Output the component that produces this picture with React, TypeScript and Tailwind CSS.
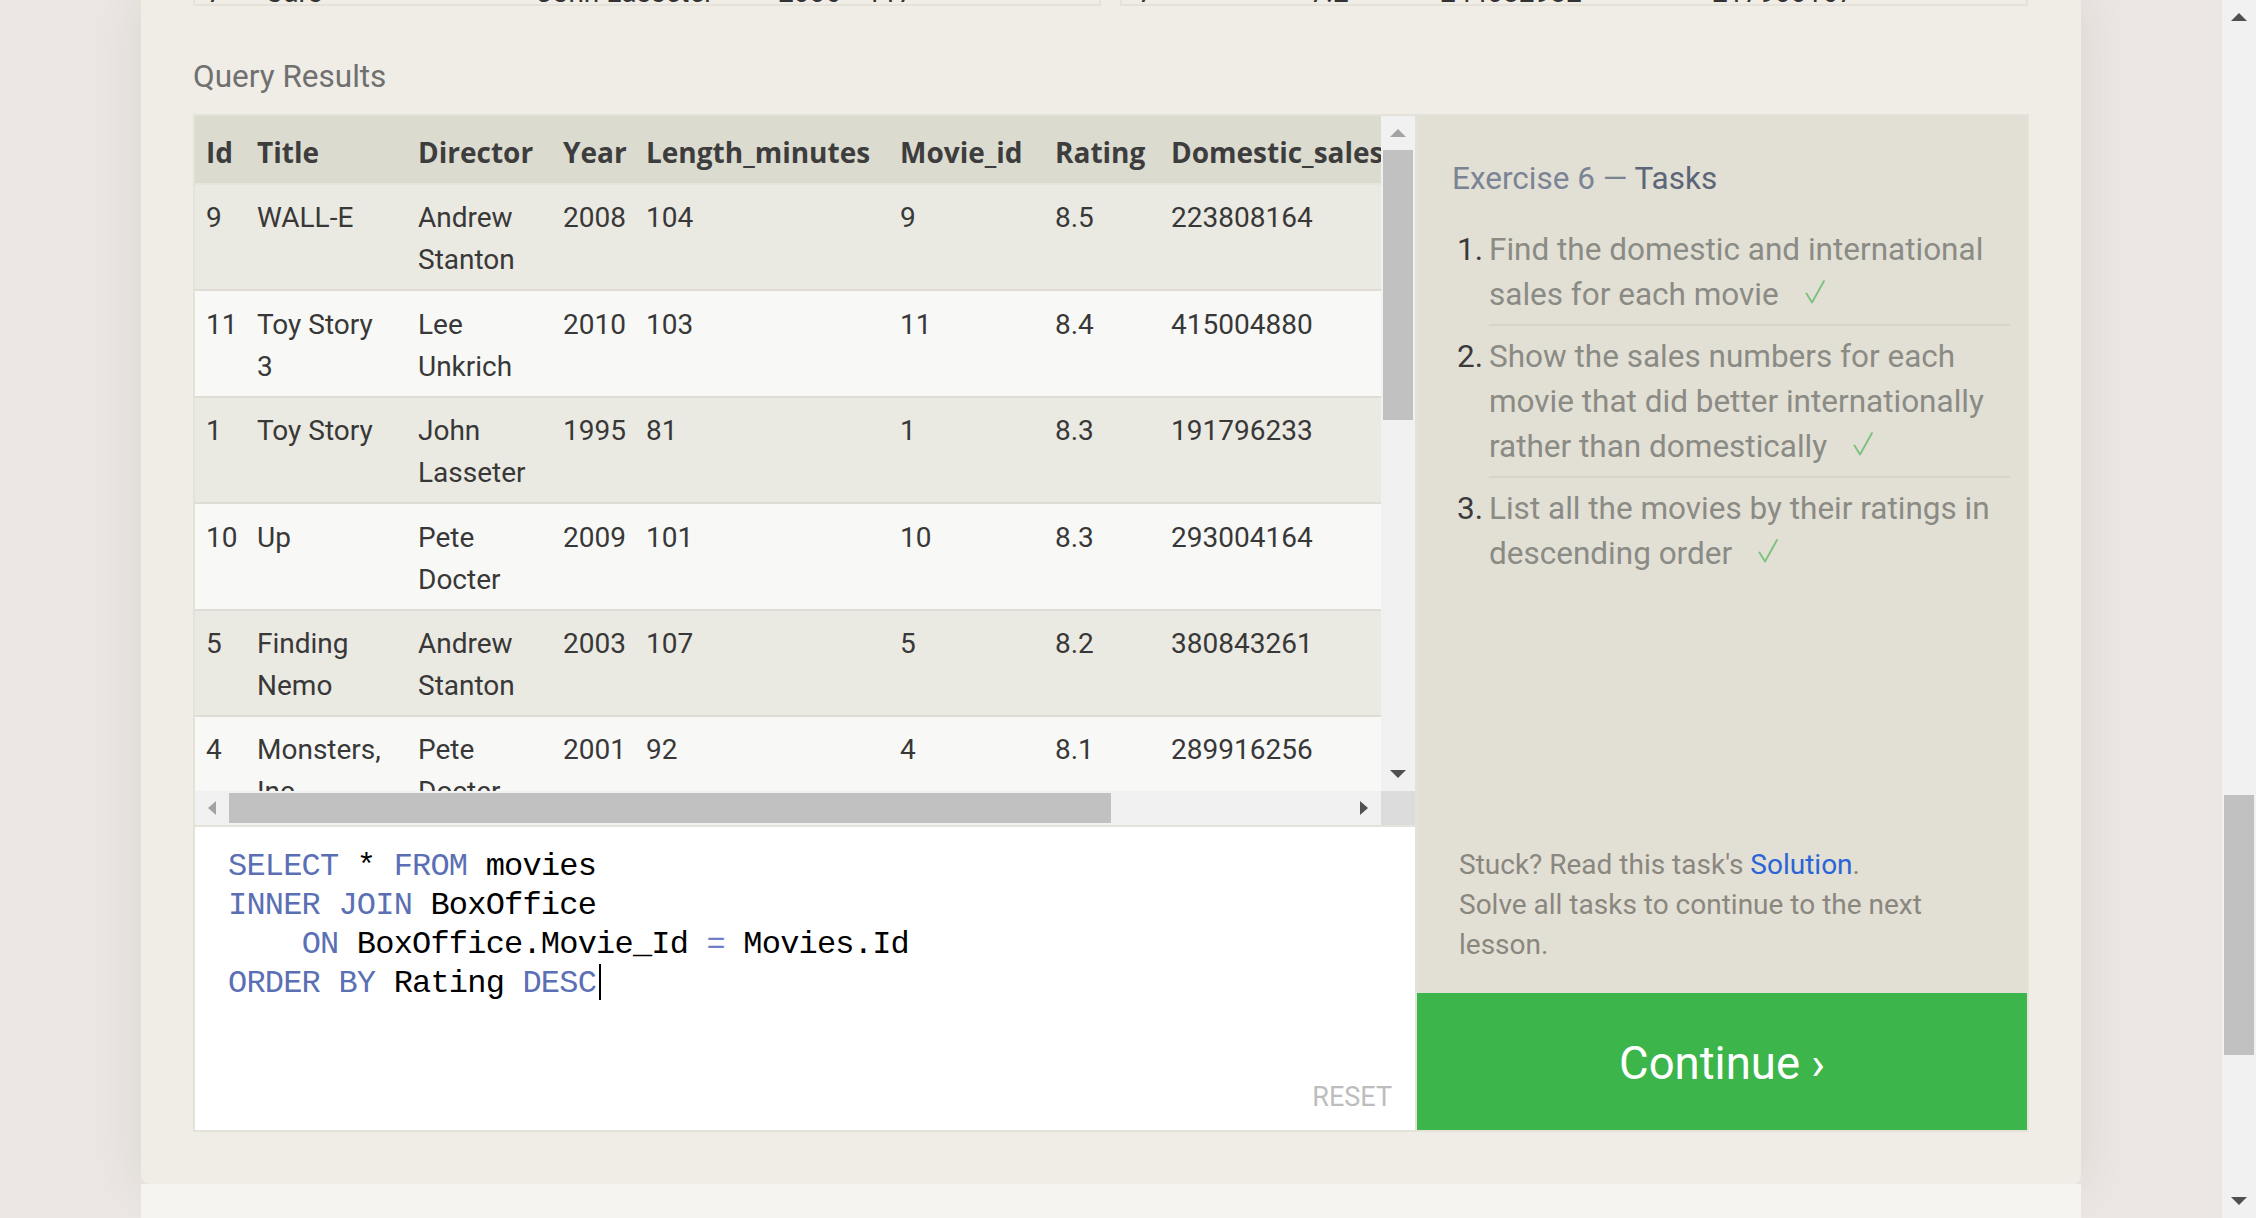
import React from "react";

type Dir = "up" | "down" | "left" | "right";

const columns = [
  { label: "Id", width: "w-[51px]" },
  { label: "Title", width: "w-[161px]" },
  { label: "Director", width: "w-[145px]" },
  { label: "Year", width: "w-[83px]" },
  { label: "Length_minutes", width: "w-[254px]" },
  { label: "Movie_id", width: "w-[155px]" },
  { label: "Rating", width: "w-[116px]" },
  { label: "Domestic_sales", width: "w-[250px]" },
];

// wrapped the way the narrow result pane wraps them
const rows = [
  ["9", "WALL-E", "Andrew\nStanton", "2008", "104", "9", "8.5", "223808164"],
  ["11", "Toy Story\n3", "Lee\nUnkrich", "2010", "103", "11", "8.4", "415004880"],
  ["1", "Toy Story", "John\nLasseter", "1995", "81", "1", "8.3", "191796233"],
  ["10", "Up", "Pete\nDocter", "2009", "101", "10", "8.3", "293004164"],
  ["5", "Finding\nNemo", "Andrew\nStanton", "2003", "107", "5", "8.2", "380843261"],
  ["4", "Monsters,\nInc.", "Pete\nDocter", "2001", "92", "4", "8.1", "289916256"],
];

const tasks = [
  ["Find the domestic and international", "sales for each movie"],
  ["Show the sales numbers for each", "movie that did better internationally", "rather than domestically"],
  ["List all the movies by their ratings in", "descending order"],
];

function Arrow({ dir, className = "" }: { dir: Dir; className?: string }) {
  const vertical = dir === "up" || dir === "down";
  const points = {
    up: "0,8 8,0 16,8",
    down: "0,0 16,0 8,8",
    left: "8,0 8,14 0,7",
    right: "0,0 8,7 0,14",
  }[dir];
  return (
    <svg
      viewBox={vertical ? "0 0 16 8" : "0 0 8 14"}
      className={`${vertical ? "h-[8px] w-[16px]" : "h-[14px] w-[8px]"} ${className}`}
      fill="currentColor"
      aria-hidden
    >
      <polygon points={points} />
    </svg>
  );
}

function Check() {
  return (
    <svg viewBox="0 0 20 24" className="ml-[26px] inline-block h-[24px] w-[20px] align-[1px]" fill="none" aria-hidden>
      <path d="M1.5 13.5 L7 22.5 L19 1" stroke="#79c27d" strokeWidth="1.8" strokeLinecap="round" strokeLinejoin="round" />
    </svg>
  );
}

export default function App() {
  const kw = "text-[#5a6fb4]";
  return (
    <div className="flex h-[1218px] w-full overflow-hidden bg-[#ebe6e3] font-['Roboto',sans-serif]">
      <div className="flex flex-1 flex-col items-center">
        <main className="flex h-[1184px] w-[1940px] shrink-0 flex-col rounded-b-[8px] bg-[#efede6] px-[52px] shadow-[0_0_48px_rgba(60,40,20,0.09)]">
          {/* Bottom edge of the two source tables, scrolled out of view */}
          <div className="flex gap-[19px] text-[28px] leading-[42px] text-[#333]">
            <div className="h-[6px] w-[908px] overflow-hidden border-x-2 border-b-2 border-[#e4e2d9]">
              <div className="-mt-[28px] flex whitespace-nowrap pl-[12px]">
                <span className="w-[58px]">7</span>
                <span className="w-[272px]">Cars</span>
                <span className="w-[241px]">John Lasseter</span>
                <span className="w-[88px]">2006</span>
                <span>117</span>
              </div>
            </div>
            <div className="h-[6px] w-[908px] overflow-hidden border-x-2 border-b-2 border-[#e4e2d9]">
              <div className="-mt-[28px] flex whitespace-nowrap pl-[16px]">
                <span className="w-[172px]">7</span>
                <span className="w-[130px]">7.2</span>
                <span className="w-[272px]">244082982</span>
                <span>217900167</span>
              </div>
            </div>
          </div>

          <h2 className="mt-[47px] text-[31.5px] leading-[47px] text-[#707070]">Query Results</h2>

          <section className="mt-[14px] flex gap-[2px] border-2 border-[#e4e2d9] bg-[#e4e2d9]">
            {/* Results + editor */}
            <div className="flex w-[1220px] flex-col gap-[2px]">
              <div>
                <div className="flex h-[675px]">
                  <div className="flex-1 overflow-hidden">
                    <table className="w-[1215px] table-fixed border-collapse text-[28px] leading-[42px] text-[#383838]">
                      <colgroup>
                        {columns.map((c) => (
                          <col key={c.label} className={c.width} />
                        ))}
                      </colgroup>
                      <thead>
                        <tr className="border-b-2 border-[#e5e4dd] bg-[#dcdbd0]">
                          {columns.map((c) => (
                            <th
                              key={c.label}
                              className="whitespace-nowrap px-[11px] pt-[15px] pb-[10px] text-left font-['Open_Sans',sans-serif] font-bold text-[#3d3d3d]"
                            >
                              {c.label}
                            </th>
                          ))}
                        </tr>
                      </thead>
                      <tbody>
                        {rows.map((r, i) => (
                          <tr
                            key={r[0]}
                            className={`border-b-2 border-[#dedcd5] ${i % 2 === 0 ? "bg-[#eae9e2]" : "bg-[#f8f8f7]"}`}
                          >
                            {r.map((v, j) => (
                              <td key={j} className="whitespace-pre-line px-[11px] pt-[12.4px] pb-[8px] align-top">
                                {v}
                              </td>
                            ))}
                          </tr>
                        ))}
                      </tbody>
                    </table>
                  </div>
                  {/* vertical scrollbar */}
                  <div className="flex w-[34px] flex-col bg-[#f1f1f1]">
                    <div className="flex h-[34px] items-center justify-center">
                      <Arrow dir="up" className="text-[#a3a3a3]" />
                    </div>
                    <div className="mx-[2px] h-[270px] bg-[#c1c1c1]" />
                    <div className="flex-1" />
                    <div className="flex h-[34px] items-center justify-center">
                      <Arrow dir="down" className="text-[#505050]" />
                    </div>
                  </div>
                </div>
                {/* horizontal scrollbar */}
                <div className="flex h-[34px]">
                  <div className="flex flex-1 bg-[#f1f1f1]">
                    <div className="flex w-[34px] items-center justify-center">
                      <Arrow dir="left" className="text-[#a3a3a3]" />
                    </div>
                    <div className="my-[2px] w-[882px] bg-[#c1c1c1]" />
                    <div className="flex-1" />
                    <div className="flex w-[34px] items-center justify-center">
                      <Arrow dir="right" className="text-[#505050]" />
                    </div>
                  </div>
                  <div className="w-[34px] bg-[#dcdcdc]" />
                </div>
              </div>

              {/* SQL editor */}
              <div className="flex h-[303px] flex-col bg-white">
                <div className="pl-[33px] pt-[20px] font-['Liberation_Mono',monospace] text-[32px] leading-[39px] tracking-[-0.8px] text-black">
                  <div className="whitespace-pre">
                    <span className={kw}>SELECT</span> * <span className={kw}>FROM</span> movies
                  </div>
                  <div className="whitespace-pre">
                    <span className={kw}>INNER JOIN</span> BoxOffice
                  </div>
                  <div className="whitespace-pre">
                    {"    "}
                    <span className={kw}>ON</span> BoxOffice.Movie_Id <span className="text-[#7080c8]">=</span> Movies.Id
                  </div>
                  <div className="whitespace-pre">
                    <span className={kw}>ORDER BY</span> Rating <span className={kw}>DESC</span>
                    <span className="ml-[3px] inline-block h-[36px] w-[2px] bg-black align-[-8px]" />
                  </div>
                </div>
                <button className="mt-auto mr-[23px] mb-[12px] self-end text-[27px] leading-[42px] text-[#bdbdbd]">
                  RESET
                </button>
              </div>
            </div>

            {/* Exercise tasks */}
            <aside className="flex flex-1 flex-col">
              <div className="flex flex-1 flex-col bg-[#e2dfd4] pt-[39px] pr-[17px] pl-[35px]">
                <h3 className="text-[31.5px] leading-[47px] text-[#7b8494]">
                  Exercise 6 — <span className="text-[#5c6678]">Tasks</span>
                </h3>
                <ol className="mt-[17px] text-[31.5px] leading-[45px]">
                  {tasks.map((lines, i) => (
                    <li key={i} className="flex">
                      <span className="ml-[5px] w-[32px] shrink-0 pt-[8px] text-[#3a3a3a]">{i + 1}.</span>
                      <div
                        className={`flex-1 pt-[8px] pb-[7px] text-[#8b8b86] ${
                          i < tasks.length - 1 ? "border-b-2 border-[#d7d5ca]" : ""
                        }`}
                      >
                        {lines.map((l, k) => (
                          <div key={k} className="whitespace-nowrap">
                            {l}
                            {k === lines.length - 1 && <Check />}
                          </div>
                        ))}
                      </div>
                    </li>
                  ))}
                </ol>
                <p className="mt-auto pb-[28px] pl-[7px] text-[28px] leading-[40px] text-[#8a8680]">
                  Stuck? Read this task's <a className="text-[#2a64d6]">Solution</a>.
                  <br />
                  Solve all tasks to continue to the next
                  <br />
                  lesson.
                </p>
              </div>
              <button className="flex h-[137px] items-center justify-center bg-[#3cb54b] pt-[6px] text-[45.5px] text-white">
                Continue ›
              </button>
            </aside>
          </section>
        </main>
        <div className="w-[1940px] flex-1 bg-[#f5f4f0]" />
      </div>

      {/* page scrollbar */}
      <div className="flex w-[34px] flex-col bg-[#f1f1f1]">
        <div className="flex h-[34px] items-center justify-center">
          <Arrow dir="up" className="text-[#505050]" />
        </div>
        <div className="h-[761px]" />
        <div className="mx-[2px] h-[260px] bg-[#c1c1c1]" />
        <div className="flex-1" />
        <div className="flex h-[34px] items-center justify-center">
          <Arrow dir="down" className="text-[#505050]" />
        </div>
      </div>
    </div>
  );
}
